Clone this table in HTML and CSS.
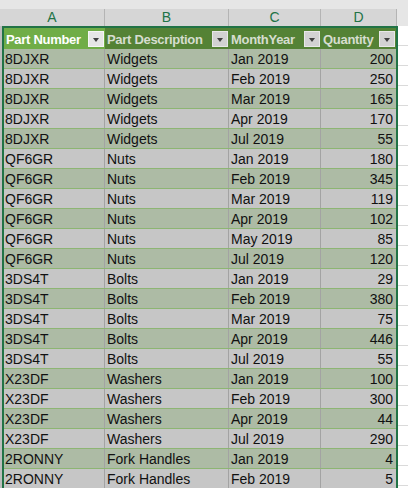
FILE: index.html
```html
<!DOCTYPE html>
<html>
<head>
<meta charset="utf-8">
<link rel="stylesheet" href="styles.css">
</head>
<body>
<div class="sheet">
  <div class="topband"></div>
  <div class="colheads">
    <div class="colhead ca">A</div>
    <div class="colhead cb">B</div>
    <div class="colhead cc">C</div>
    <div class="colhead cd">D</div>
    <div class="colhead rest"></div>
  </div>
  <div class="body">
    <div class="gutter"></div>
    <div class="table">
      <div class="row head">
        <div class="hcell active"><span class="ht">Part Number</span><span class="dd"></span></div>
        <div class="hcell"><span class="ht">Part Description</span><span class="dd"></span></div>
        <div class="hcell"><span class="ht">MonthYear</span><span class="dd"></span></div>
        <div class="hcell"><span class="ht">Quantity</span><span class="dd"></span></div>
      </div>
      <div class="row odd"><div class="cell">8DJXR</div><div class="cell">Widgets</div><div class="cell">Jan 2019</div><div class="cell num">200</div></div>
      <div class="row even"><div class="cell">8DJXR</div><div class="cell">Widgets</div><div class="cell">Feb 2019</div><div class="cell num">250</div></div>
      <div class="row odd"><div class="cell">8DJXR</div><div class="cell">Widgets</div><div class="cell">Mar 2019</div><div class="cell num">165</div></div>
      <div class="row even"><div class="cell">8DJXR</div><div class="cell">Widgets</div><div class="cell">Apr 2019</div><div class="cell num">170</div></div>
      <div class="row odd"><div class="cell">8DJXR</div><div class="cell">Widgets</div><div class="cell">Jul 2019</div><div class="cell num">55</div></div>
      <div class="row even"><div class="cell">QF6GR</div><div class="cell">Nuts</div><div class="cell">Jan 2019</div><div class="cell num">180</div></div>
      <div class="row odd"><div class="cell">QF6GR</div><div class="cell">Nuts</div><div class="cell">Feb 2019</div><div class="cell num">345</div></div>
      <div class="row even"><div class="cell">QF6GR</div><div class="cell">Nuts</div><div class="cell">Mar 2019</div><div class="cell num">119</div></div>
      <div class="row odd"><div class="cell">QF6GR</div><div class="cell">Nuts</div><div class="cell">Apr 2019</div><div class="cell num">102</div></div>
      <div class="row even"><div class="cell">QF6GR</div><div class="cell">Nuts</div><div class="cell">May 2019</div><div class="cell num">85</div></div>
      <div class="row odd"><div class="cell">QF6GR</div><div class="cell">Nuts</div><div class="cell">Jul 2019</div><div class="cell num">120</div></div>
      <div class="row even"><div class="cell">3DS4T</div><div class="cell">Bolts</div><div class="cell">Jan 2019</div><div class="cell num">29</div></div>
      <div class="row odd"><div class="cell">3DS4T</div><div class="cell">Bolts</div><div class="cell">Feb 2019</div><div class="cell num">380</div></div>
      <div class="row even"><div class="cell">3DS4T</div><div class="cell">Bolts</div><div class="cell">Mar 2019</div><div class="cell num">75</div></div>
      <div class="row odd"><div class="cell">3DS4T</div><div class="cell">Bolts</div><div class="cell">Apr 2019</div><div class="cell num">446</div></div>
      <div class="row even"><div class="cell">3DS4T</div><div class="cell">Bolts</div><div class="cell">Jul 2019</div><div class="cell num">55</div></div>
      <div class="row odd"><div class="cell">X23DF</div><div class="cell">Washers</div><div class="cell">Jan 2019</div><div class="cell num">100</div></div>
      <div class="row even"><div class="cell">X23DF</div><div class="cell">Washers</div><div class="cell">Feb 2019</div><div class="cell num">300</div></div>
      <div class="row odd"><div class="cell">X23DF</div><div class="cell">Washers</div><div class="cell">Apr 2019</div><div class="cell num">44</div></div>
      <div class="row even"><div class="cell">X23DF</div><div class="cell">Washers</div><div class="cell">Jul 2019</div><div class="cell num">290</div></div>
      <div class="row odd"><div class="cell">2RONNY</div><div class="cell">Fork Handles</div><div class="cell">Jan 2019</div><div class="cell num">4</div></div>
      <div class="row even"><div class="cell">2RONNY</div><div class="cell">Fork Handles</div><div class="cell">Feb 2019</div><div class="cell num">5</div></div>
    </div>
    <div class="outside"></div>
  </div>
</div>
</body>
</html>
```
FILE: styles.css
```css
* { box-sizing: border-box; }
html, body { margin: 0; padding: 0; background: #ffffff; }
body { width: 408px; height: 488px; overflow: hidden; font-family: "Liberation Sans", Arial, sans-serif; }
.sheet { display: flex; flex-direction: column; }
.topband { height: 9px; background: #e6e6e6; }
.colheads { display: flex; height: 17px; background: #d6d6d6; }
.colhead { color: #217346; font-size: 14px; line-height: 17px; text-align: center; border-right: 1px solid #b4b4b4; }
.ca { width: 105px; }
.cb { width: 124px; }
.cc { width: 92px; }
.cd { width: 76px; }
.colhead.rest { flex: 1; background: #e6e6e6; border-right: none; }
.body { display: flex; }
.gutter { width: 2px; background: #bdbdbd; }
.table { width: 396px; border: 2px solid #217346; border-bottom: none; display: flex; flex-direction: column; }
.outside { flex: 1; background: linear-gradient(#ffffff 19px, #dadada 19px) 2px 0 / 100% 20px; }
.row { display: grid; grid-template-columns: 101px 124px 92px 75px; height: 20px; }
.row.head { background: #548235; height: 21px; }
.row.odd { background: #adbba5; border-bottom: 1px solid #8db573; }
.row.even { background: #c6c6c6; border-bottom: 1px solid #8db573; }
.hcell { display: flex; align-items: center; justify-content: space-between; gap: 1px; padding: 1px 1px 0 2px; font-weight: bold; font-size: 13px; letter-spacing: -0.3px; color: #d6ddcf; white-space: nowrap; }
.ht { white-space: nowrap; }
.hcell.active { background: #70ad47; color: #ffffff; }
.dd { width: 16px; height: 16px; background: #d2d2d2; border: 1px solid #e8e8e8; position: relative; flex: none; }
.dd::after { content: ""; position: absolute; left: 3.5px; top: 5.5px; border-left: 3.5px solid transparent; border-right: 3.5px solid transparent; border-top: 4px solid #404040; }
.hcell.active .dd { background: #e6e6e6; border-color: #f6f6f6; }
.cell { font-size: 14px; line-height: 17px; padding: 2px 3px 0 2px; color: #111111; white-space: nowrap; overflow: hidden; border-right: 1px solid #a3a3a3; }
.cell:first-child { padding-left: 1px; }
.cell:last-child { border-right: none; }
.cell.num { text-align: right; }
```
